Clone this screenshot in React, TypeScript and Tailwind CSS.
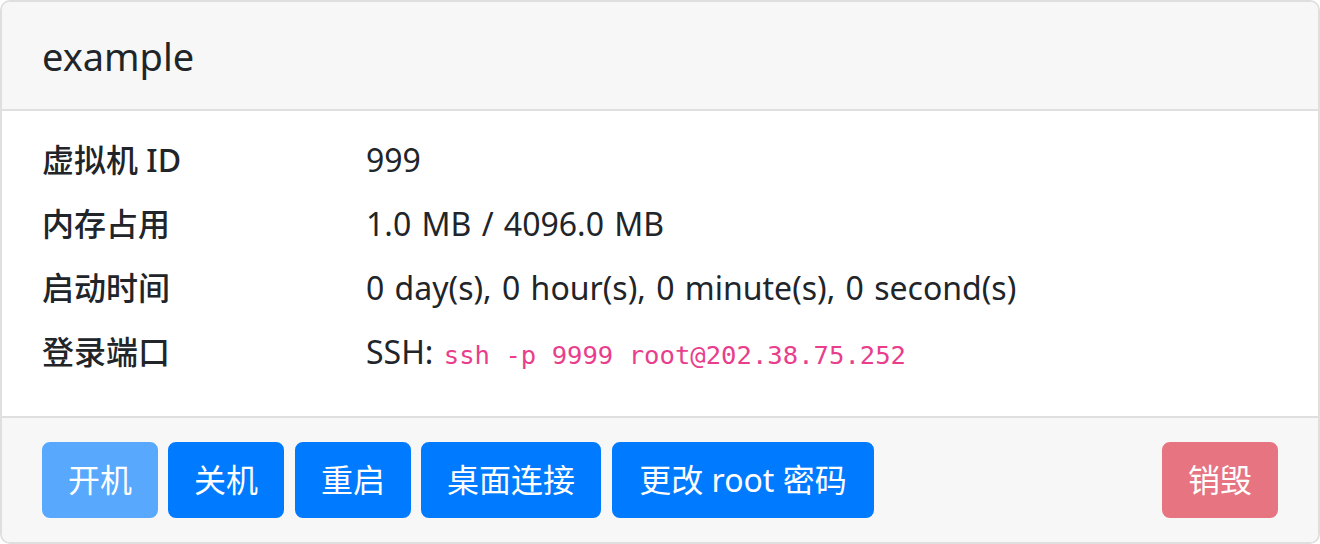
export default function App() {
  const rows: [string, React.ReactNode][] = [
    ["虚拟机 ID", "999"],
    ["内存占用", "1.0 MB / 4096.0 MB"],
    ["启动时间", "0 day(s), 0 hour(s), 0 minute(s), 0 second(s)"],
    [
      "登录端口",
      <span>
        SSH:{" "}
        <code className="text-[25.6px] text-[#e83e8c] [word-spacing:0px] [font-family:'DejaVu_Sans_Mono',monospace]">
          ssh -p 9999 root@202.38.75.252
        </code>
      </span>,
    ],
  ];
  const btn =
    "h-[76px] rounded-[8px] border-2 text-[32px] leading-[48px] text-white flex items-center justify-center whitespace-pre";
  return (
    <div className="w-[1320px] h-[544px] bg-white text-[#212529] [font-family:'Noto_Sans','Noto_Sans_CJK_SC',sans-serif]">
      <div className="w-[1320px] h-[544px] border-2 border-[#dfdfdf] rounded-[10px] overflow-hidden flex flex-col">
        <div className="h-[109px] bg-[#f7f7f7] border-b-2 border-[#dfdfdf] px-[40px] flex items-center">
          <div className="text-[38px] leading-[56px]">example</div>
        </div>
        <div className="flex-1 px-[40px] pt-[25px] flex flex-col">
          {rows.map(([k, v], i) => (
            <div key={i} className="flex h-[64px] text-[32px] leading-[48px]">
              <div className="w-[324px] font-medium">{k}</div>
              <div className="[word-spacing:2px]">{v}</div>
            </div>
          ))}
        </div>
        <div className="h-[126px] bg-[#f7f7f7] border-t-2 border-[#dfdfdf] px-[40px] pt-[24px] flex">
          <div className="flex">
            <button className={btn + " w-[116px] mr-[10px] bg-[#58a8fe] border-[#58a8fe]"}>开机</button>
            <button className={btn + " w-[116px] mr-[11px] bg-[#007bff] border-[#007bff]"}>关机</button>
            <button className={btn + " w-[116px] mr-[10px] bg-[#007bff] border-[#007bff]"}>重启</button>
            <button className={btn + " w-[180px] mr-[11px] bg-[#007bff] border-[#007bff]"}>桌面连接</button>
            <button className={btn + " w-[262px] bg-[#007bff] border-[#007bff]"}>更改 root 密码</button>
          </div>
          <div className="ml-auto">
            <button className={btn + " w-[116px] bg-[#e77481] border-[#e77481]"}>销毁</button>
          </div>
        </div>
      </div>
    </div>
  );
}
